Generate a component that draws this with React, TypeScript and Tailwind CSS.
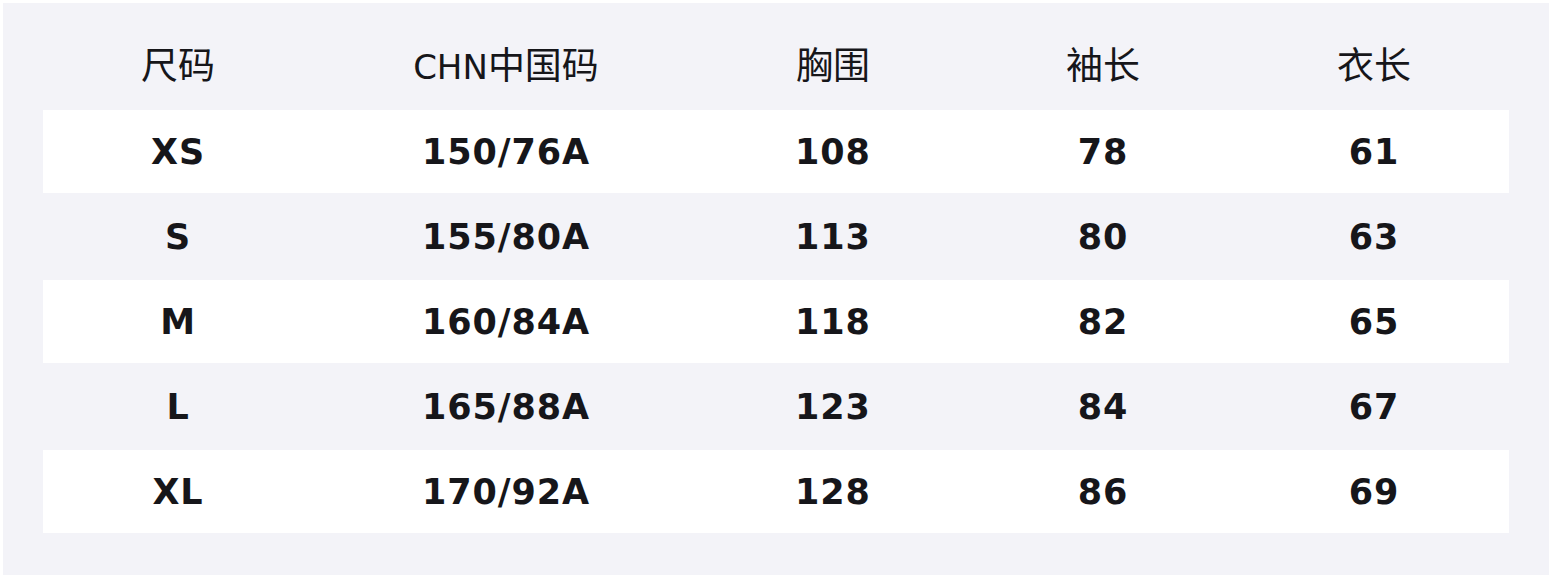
const headers = [
  { latin: "", cjk: "尺码" },
  { latin: "CHN", cjk: "中国码" },
  { latin: "", cjk: "胸围" },
  { latin: "", cjk: "袖长" },
  { latin: "", cjk: "衣长" },
];

const rows = [
  ["XS", "150/76A", "108", "78", "61"],
  ["S", "155/80A", "113", "80", "63"],
  ["M", "160/84A", "118", "82", "65"],
  ["L", "165/88A", "123", "84", "67"],
  ["XL", "170/92A", "128", "86", "69"],
];

const cols = "grid grid-cols-[270px_386px_268px_272px_270px]";

export default function App() {
  return (
    <div
      className="h-[578px] w-[1552px] bg-white p-[3px]"
      style={{ fontFamily: '"DejaVu Sans", "Noto Sans CJK SC", sans-serif' }}
    >
      <div className="h-full w-full bg-[#f3f3f8] px-10 pt-[21px] pb-[41px] text-[#16161a]">
        <div className={`${cols} h-[85px] items-center text-[37px] leading-none`}>
          {headers.map((h) => (
            <div key={h.cjk} className="text-center">
              {h.latin && <span className="text-[34px]">{h.latin}</span>}
              {h.cjk}
            </div>
          ))}
        </div>

        {rows.map((r, i) => (
          <div
            key={r[0]}
            className={`${cols} h-[85px] items-center border-y border-[#f3f3f8] pt-[2px] text-[35px] font-bold tracking-[0.9px] ${
              i % 2 === 0 ? "bg-white" : "bg-[#f3f3f8]"
            }`}
          >
            {r.map((c, j) => (
              <div key={j} className="text-center">
                {c}
              </div>
            ))}
          </div>
        ))}
      </div>
    </div>
  );
}
